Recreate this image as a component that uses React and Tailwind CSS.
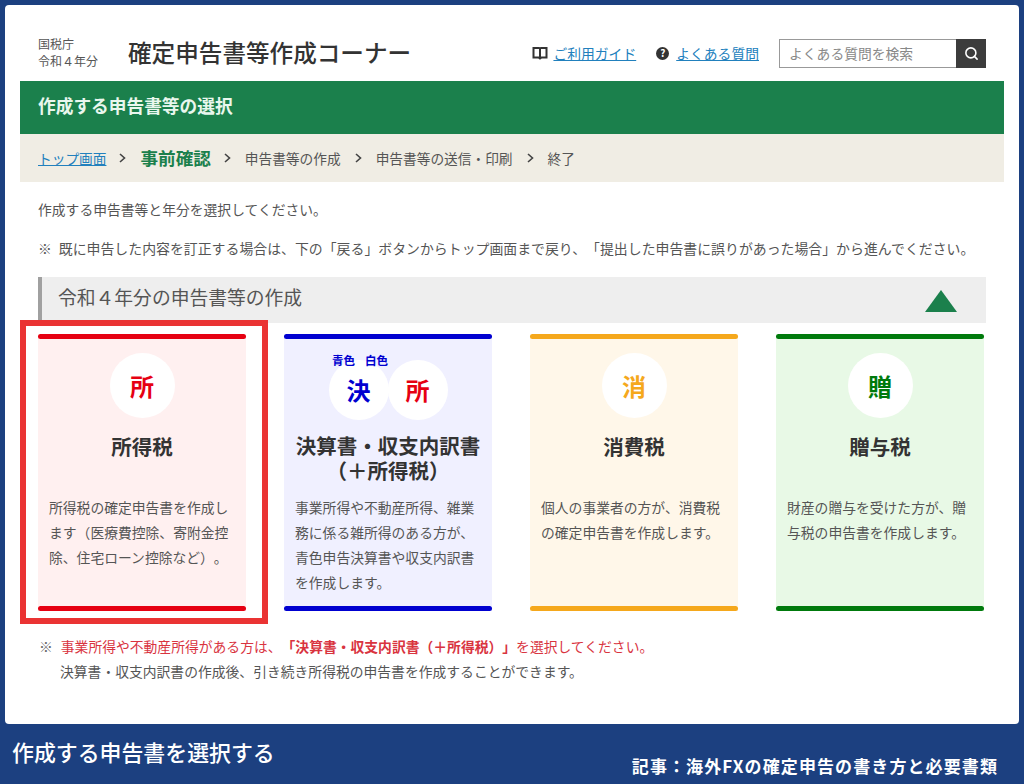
import { Search } from 'lucide-react';

function Badge({ char, color, size = 'w-[65px] h-[65px]' }) {
  return (
    <div className={`${size} rounded-full bg-white flex items-center justify-center text-[24px] font-bold ${color}`}>
      {char}
    </div>
  );
}

const cards = [
  {
    key: 'income',
    bg: 'bg-[#fff0f0]',
    bar: 'bg-[#e60012]',
    title: ['所得税'],
    text: '所得税の確定申告書を作成します（医療費控除、寄附金控除、住宅ローン控除など）。',
    char: '所',
    color: 'text-[#e60012]',
  },
  {
    key: 'settlement',
    bg: 'bg-[#f0f0ff]',
    bar: 'bg-[#0000d0]',
    title: ['決算書・収支内訳書', '（＋所得税）'],
    text: '事業所得や不動産所得、雑業務に係る雑所得のある方が、青色申告決算書や収支内訳書を作成します。',
  },
  {
    key: 'consumption',
    bg: 'bg-[#fff7e9]',
    bar: 'bg-[#f5a81c]',
    title: ['消費税'],
    text: '個人の事業者の方が、消費税の確定申告書を作成します。',
    char: '消',
    color: 'text-[#f5a81c]',
  },
  {
    key: 'gift',
    bg: 'bg-[#e8f9e6]',
    bar: 'bg-[#007a0c]',
    title: ['贈与税'],
    text: '財産の贈与を受けた方が、贈与税の申告書を作成します。',
    char: '贈',
    color: 'text-[#007a0c]',
  },
];

function Card({ card }) {
  return (
    <div className={`relative h-[277px] flex flex-col ${card.bg}`}>
      <div className={`h-[5px] rounded-sm ${card.bar}`} />
      <div className="flex-1 flex flex-col px-[11px]">
        {card.char ? (
          <div className="flex justify-center mt-[14px]">
            <Badge char={card.char} color={card.color} />
          </div>
        ) : (
          <div className="relative flex justify-center mt-[21px]">
            <span className="absolute left-[37px] top-[-5px] text-[11.5px] leading-none font-bold text-[#0000d0] z-10">青色</span>
            <span className="absolute left-[70px] top-[-5px] text-[11.5px] leading-none font-bold text-[#0000d0] z-10">白色</span>
            <Badge char="決" color="text-[#0000d0]" size="w-[60px] h-[60px]" />
            <Badge char="所" color="text-[#e60012]" size="w-[60px] h-[60px] -ml-[1px]" />
          </div>
        )}
        <div className={`${card.char ? 'mt-[16px] h-[61px]' : 'mt-[13px] h-[62px]'} text-center text-[20.5px] leading-[25px] font-bold text-[#333]`}>
          {card.title.map((t) => (
            <div key={t}>{t}</div>
          ))}
        </div>
        <p className="text-[13.8px] leading-[25px] text-[#555]">{card.text}</p>
      </div>
      <div className={`h-[5px] rounded-sm ${card.bar}`} />
      {card.key === 'income' && (
        <div className="absolute left-[-18px] right-[-22px] top-[-14px] bottom-[-13px] border-[6px] border-[#ea3333]" />
      )}
    </div>
  );
}

function Chevron({ className }) {
  return (
    <svg width="7" height="10" viewBox="0 0 7 10" className={className}>
      <path d="M1 1 L5.5 5 L1 9" fill="none" stroke="#444" strokeWidth="1.6" />
    </svg>
  );
}

export default function App() {
  return (
    <div
      className="w-[1024px] h-[784px] flex flex-col bg-[#1c4080] overflow-hidden [text-spacing-trim:space-all]"
      style={{ fontFamily: '"Noto Sans CJK JP", "Noto Sans", sans-serif' }}
    >
      <div className="mx-[5px] mt-[5px] h-[719px] bg-white rounded-sm">
        {/* Header */}
        <div className="h-[76px] flex px-[33px]">
          <div className="pt-[30px] text-[12px] leading-[17px] text-[#555]">
            <div>国税庁</div>
            <div>令和４年分</div>
          </div>
          <div className="ml-[30px] pt-[30px] text-[23.6px] leading-[34px] font-medium text-[#333]">
            確定申告書等作成コーナー
          </div>
          <div className="ml-auto pt-[34px] flex items-start">
            <div className="flex items-center h-[28px]">
              <svg width="16" height="14" viewBox="0 0 16 14" className="mr-[5px]">
                <path d="M1.5 2 H7 Q8 2 8 3 Q8 2 9 2 H14.5 V11.5 H9.5 L8 12.5 L6.5 11.5 H1.5 Z M8 3 V12" fill="none" stroke="#333" strokeWidth="2" />
              </svg>
              <a className="text-[13.8px] text-[#2180bd] underline">ご利用ガイド</a>
            </div>
            <div className="flex items-center h-[28px] ml-[20px]">
              <span className="w-[13px] h-[13px] rounded-full bg-[#333] text-white text-[10px] leading-none font-bold flex items-center justify-center mr-[7px]">?</span>
              <a className="text-[13.8px] text-[#2180bd] underline">よくある質問</a>
            </div>
            <div className="flex ml-[20px] h-[29px]">
              <div className="w-[177px] border border-[#999] border-r-0 pl-[9px] text-[13.8px] leading-[27px] text-[#888]">
                よくある質問を検索
              </div>
              <div className="w-[30px] bg-[#3c3c3c] flex items-center justify-center">
                <Search size={15} color="#fff" strokeWidth={2.5} />
              </div>
            </div>
          </div>
        </div>

        {/* Title bar */}
        <div className="mx-[15px] h-[53px] bg-[#1b804c] pl-[18px] pb-[4px] flex items-center text-[17.7px] font-bold text-[#e9f7ee]">
          作成する申告書等の選択
        </div>

        {/* Breadcrumb */}
        <div className="mx-[15px] h-[48px] bg-[#f0ede4] pl-[18px] flex items-center text-[13.7px] text-[#555]">
          <a className="text-[#2180bd] underline">トップ画面</a>
          <Chevron className="ml-[13px] mr-[14px]" />
          <span className="text-[17.6px] font-bold text-[#1b804c]">事前確認</span>
          <Chevron className="ml-[13px] mr-[14px]" />
          <span>申告書等の作成</span>
          <Chevron className="ml-[14px] mr-[14px]" />
          <span>申告書等の送信・印刷</span>
          <Chevron className="ml-[14px] mr-[14px]" />
          <span>終了</span>
        </div>

        {/* Intro */}
        <div className="px-[33px] text-[13.8px] text-[#555]">
          <p className="mt-[17px] leading-[20px]">作成する申告書等と年分を選択してください。</p>
          <p className="mt-[19px] leading-[20px] whitespace-nowrap">
            ※<span className="ml-[7px] text-[13.9px]">既に申告した内容を訂正する場合は、下の「戻る」ボタンからトップ画面まで戻り、「提出した申告書に誤りがあった場合」から進んでください。</span>
          </p>
        </div>

        {/* Section */}
        <div className="mx-[33px] mt-[19px] h-[46px] bg-[#eeeeee] border-l-[4px] border-[#a0a0a0] pl-[16px] pr-[29px] pb-[5px] flex items-center justify-between">
          <span className="text-[18.8px] text-[#555]">令和４年分の申告書等の作成</span>
          <svg width="32" height="22" viewBox="0 0 32 22" className="mt-[6px]">
            <polygon points="16,0 32,22 0,22" fill="#1b804c" />
          </svg>
        </div>

        <div className="mt-[11px] ml-[33px] grid grid-cols-[208px_208px_208px_208px] gap-x-[38px]">
          {cards.map((c) => (
            <Card key={c.key} card={c} />
          ))}
        </div>

        {/* Note */}
        <div className="mt-[23px] px-[34px] text-[13.8px] leading-[25px]">
          <p className="text-[#d9343f]">
            <span className="text-[#666]">※</span>
            <span className="ml-[8px]">事業所得や不動産所得がある方は、</span>
            <strong className="font-bold">「決算書・収支内訳書（＋所得税）」</strong>
            を選択してください。
          </p>
          <p className="pl-[21px] text-[#555]">決算書・収支内訳書の作成後、引き続き所得税の申告書を作成することができます。</p>
        </div>
      </div>

      {/* Caption */}
      <div className="flex-1 relative text-white">
        <div className="absolute left-[12px] top-[12px] text-[21.9px] leading-[32px] font-medium">作成する申告書を選択する</div>
        <div className="absolute right-[26px] top-[30px] text-[17px] leading-[24px] tracking-[1.1px] font-bold">記事：海外FXの確定申告の書き方と必要書類</div>
      </div>
    </div>
  );
}
